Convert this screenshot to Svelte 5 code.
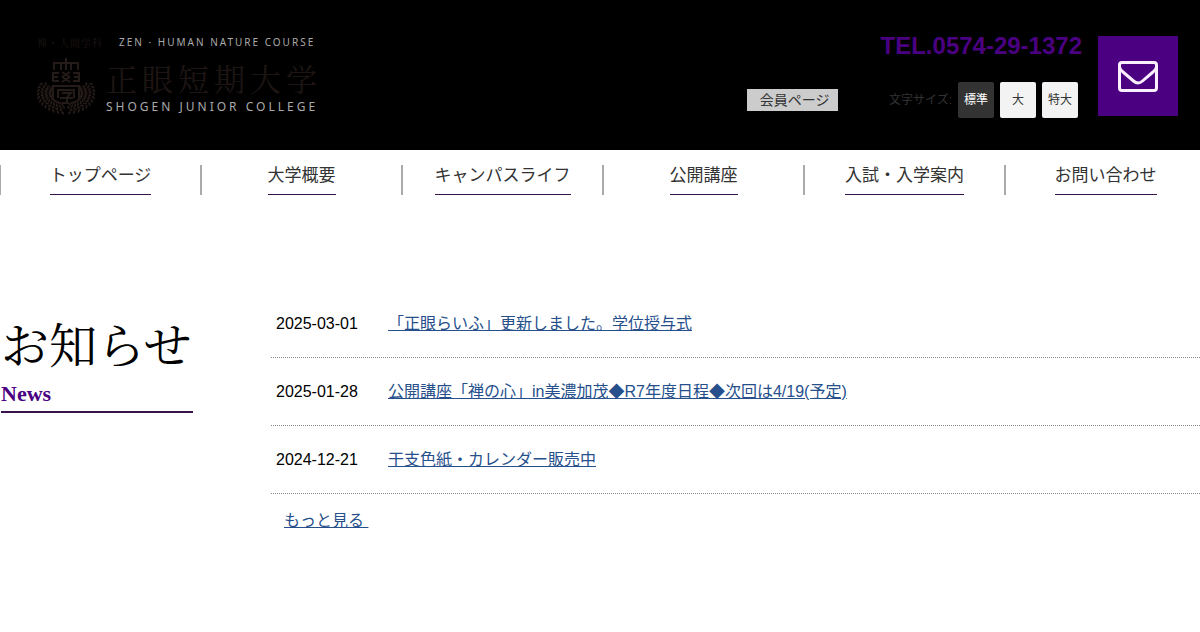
<script>
  const menu = ['トップページ', '大学概要', 'キャンパスライフ', '公開講座', '入試・入学案内', 'お問い合わせ'];
  const news = [
    { date: '2025-03-01', title: '「正眼らいふ」更新しました。学位授与式' },
    { date: '2025-01-28', title: '公開講座「禅の心」in美濃加茂◆R7年度日程◆次回は4/19(予定)' },
    { date: '2024-12-21', title: '干支色紙・カレンダー販売中' }
  ];
  const sizes = ['標準', '大', '特大'];
  let size = $state('標準');

  // Leaves of the wreath: four rows along an arc, mirrored on the other side.
  const leaves = [];
  for (let row = 0; row < 4; row++) {
    for (let i = 0; i < 12; i++) {
      const deg = 212 - i * 10 - (row % 2) * 5;
      const a = (deg * Math.PI) / 180;
      const x = 36 + Math.cos(a) * (16 + row * 4);
      const y = 43 + Math.sin(a) * (11 + row * 3);
      leaves.push({ x, y, turn: deg + 90 + (row % 2 ? 45 : -45) });
    }
  }
</script>

<header>
  <a class="logo" href="#top">
    <span class="course"><span class="ink" lang="ja">禅・人間学科</span><span class="roman">ZEN · HUMAN NATURE COURSE</span></span>
    <span class="brand">
      <svg class="crest" viewBox="7 7 58 58" aria-hidden="true">
        <g fill="none" stroke="#251b19" stroke-width="2">
          <path d="M36 8v12M24 20v-7h24v7M31 13v7M41 13v7" />
          <path d="M23 23h6M23 27h5M23 31h6M23 22v10M49 23h-6M49 27h-5M49 31h-6M49 22v10M32 22l8 5M40 22l-8 5M32 27l8 5M40 27l-8 5" />
          <path d="M23 49V36h26v13M28 48v-8h16v8M32 43h9l-4 4M30 48h13M37 47v6h-5" />
        </g>
        <g fill="#251b19">
          {#each leaves as leaf}
            <ellipse cx={leaf.x} cy={leaf.y} rx="2" ry="1" transform="rotate({leaf.turn} {leaf.x} {leaf.y})" />
            <ellipse cx={72 - leaf.x} cy={leaf.y} rx="2" ry="1" transform="rotate({-leaf.turn} {72 - leaf.x} {leaf.y})" />
          {/each}
        </g>
      </svg>
      <span class="names">
        <span class="name" lang="ja">正眼短期大学</span>
        <span class="roman college">SHOGEN JUNIOR COLLEGE</span>
      </span>
    </span>
  </a>

  <a class="member" href="#member">会員ページ</a>

  <div class="contact">
    <a class="tel" href="tel:0574291372">TEL.0574-29-1372</a>
    <div class="sizes">
      <span>文字サイズ:</span>
      {#each sizes as s}
        <button class:active={size === s} onclick={() => (size = s)}>{s}</button>
      {/each}
    </div>
  </div>

  <a class="mail" href="#contact" aria-label="お問い合わせ">
    <svg viewBox="0 0 40 31" width="40" height="31" fill="none" stroke="#fbefff" stroke-width="3" aria-hidden="true">
      <rect x="1.5" y="1.5" width="37" height="28" rx="2.5" />
      <path d="M1.5 6C2 8.500 3 9.500 5 11L15.500 20Q20 24 24.500 20L35 11C37 9.500 38 8.500 38.500 6" />
    </svg>
  </a>
</header>

<nav>
  {#each menu as item}
    <div class="item"><a href="#menu">{item}</a></div>
  {/each}
</nav>

<main>
  <h2><span class="ja" lang="ja">お知らせ</span><span class="en">News</span></h2>
  <div class="list">
    <dl>
      {#each news as n}
        <div class="row"><dt>{n.date}</dt><dd><a href="#news">{n.title}</a></dd></div>
      {/each}
    </dl>
    <a class="more" href="#more">もっと見る&nbsp;</a>
  </div>
</main>

<style>
  :global(body) {
    margin: 0;
    background: #fff;
    color: #000;
    font: 16px/24px "Liberation Sans", "Noto Sans CJK JP", sans-serif;
    overflow-x: hidden;
  }
  header {
    display: flex;
    align-items: flex-start;
    box-sizing: border-box;
    height: 150px;
    padding: 36px 22px 0 37px;
    background: #000;
  }
  a { color: inherit; text-decoration: none; }
  .logo { display: flex; flex-direction: column; gap: 8px; margin-right: auto; color: #1d1513; }
  .course { display: flex; gap: 16px; line-height: 13px; }
  .ink { font-family: "Noto Serif CJK JP", "IPAMincho", serif; font-size: 10px; letter-spacing: 1px; }
  .roman { color: #aaa; font-family: "Noto Sans", sans-serif; font-size: 10px; letter-spacing: 2px; }
  .brand { display: flex; gap: 11px; }
  .crest { width: 58px; height: 58px; }
  .names { display: flex; flex-direction: column; }
  .name { font: 31px/42px "Noto Serif CJK JP", "IPAMincho", serif; letter-spacing: 5px; }
  .college { font-size: 12px; line-height: 16px; letter-spacing: 3px; }
  .member {
    margin: 53px 43px 0 0;
    padding: 0 8px 0 13px;
    background: #ccc;
    color: #333;
    font-size: 14px;
    line-height: 22px;
  }
  .contact { display: flex; flex-direction: column; align-items: flex-end; gap: 26px; margin-right: 16px; }
  .tel { color: #4b0082; font-size: 24px; line-height: 20px; font-weight: bold; }
  .sizes { display: flex; align-items: center; gap: 6px; margin-right: 4px; color: #333; font-size: 12px; }
  button {
    width: 36px;
    height: 36px;
    padding: 0;
    border: 0;
    border-radius: 2px;
    background: #f3f3f3;
    color: #333;
    font: inherit;
  }
  button.active { background: #333; color: #fff; }
  .mail { display: grid; place-items: center; width: 80px; height: 80px; background: #4b0082; }
  nav { display: flex; margin: 15px -5px 0 -1px; }
  .item { flex: 1; display: flex; justify-content: center; height: 30px; border-left: 2px solid #aaa; }
  .item a { border-bottom: 1px solid #36134a; box-sizing: border-box; height: 30px; color: #333; font-size: 17px; line-height: 22px; white-space: nowrap; }
  main { display: flex; gap: 78px; padding: 95px 0 0 1px; }
  h2 { display: flex; flex-direction: column; gap: 8px; width: 192px; margin: 27px 0 auto; border-bottom: 2px solid #36134a; font-weight: normal; }
  .ja { font: 48px/52px "Noto Serif CJK JP", "IPAMincho", serif; }
  .en { color: #4b0082; font: bold 22px/34px "Liberation Serif", serif; }
  .list { flex: 1; }
  dl { margin: 0; }
  .row { display: flex; align-items: center; height: 67px; padding-left: 5px; border-bottom: 1px dotted #888; }
  dt { width: 112px; }
  dd { margin: 0; }
  dd a, .more { color: #264f8c; text-decoration: underline; }
  .more { display: inline-block; margin: 15px 0 0 13px; }
</style>
